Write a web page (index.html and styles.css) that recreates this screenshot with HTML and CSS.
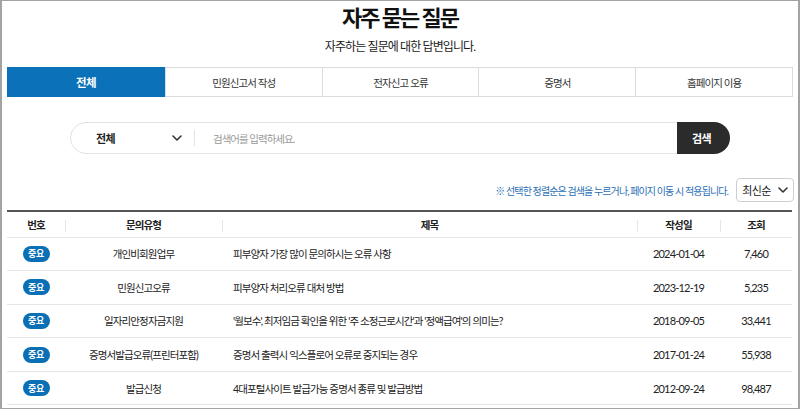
FILE: index.html
```html
<!DOCTYPE html>
<html lang="ko">
<head>
<meta charset="utf-8">
<title>자주 묻는 질문</title>
<link rel="stylesheet" href="styles.css">
</head>
<body>
<div class="frame">
  <h1 class="title">자주 묻는 질문</h1>
  <p class="subtitle">자주하는 질문에 대한 답변입니다.</p>

  <ul class="tabs">
    <li class="tab active">전체</li>
    <li class="tab">민원신고서 작성</li>
    <li class="tab">전자신고 오류</li>
    <li class="tab">증명서</li>
    <li class="tab">홈페이지 이용</li>
  </ul>

  <form class="search">
    <div class="select">
      <span class="select-label">전체</span>
      <svg class="chev" width="10" height="6" viewBox="0 0 10 6"><path d="M1 1l4 4 4-4" fill="none" stroke="#333" stroke-width="1.6" stroke-linecap="round" stroke-linejoin="round"/></svg>
    </div>
    <span class="divider"></span>
    <span class="placeholder">검색어를 입력하세요.</span>
    <button type="button" class="search-btn">검색</button>
  </form>

  <div class="sortbar">
    <span class="note">※ 선택한 정렬순은 검색을 누르거나, 페이지 이동 시 적용됩니다.</span>
    <div class="sort">최신순
      <svg class="chev" width="10" height="6" viewBox="0 0 10 6"><path d="M1 1l4 4 4-4" fill="none" stroke="#333" stroke-width="1.6" stroke-linecap="round" stroke-linejoin="round"/></svg>
    </div>
  </div>

  <table class="board">
    <colgroup>
      <col class="c-no"><col class="c-type"><col class="c-title"><col class="c-date"><col class="c-view">
    </colgroup>
    <thead>
      <tr><th>번호</th><th>문의유형</th><th>제목</th><th>작성일</th><th>조회</th></tr>
    </thead>
    <tbody>
      <tr><td><span class="badge">중요</span></td><td>개인비회원업무</td><td class="subj">피부양자 가장 많이 문의하시는 오류 사항</td><td class="num">2024-01-04</td><td class="num">7,460</td></tr>
      <tr><td><span class="badge">중요</span></td><td>민원신고오류</td><td class="subj">피부양자 처리오류 대처 방법</td><td class="num">2023-12-19</td><td class="num">5,235</td></tr>
      <tr><td><span class="badge">중요</span></td><td>일자리안정자금지원</td><td class="subj">'월보수', 최저임금 확인을 위한 '주 소정근로시간'과 '정액급여'의 의미는?</td><td class="num">2018-09-05</td><td class="num">33,441</td></tr>
      <tr><td><span class="badge">중요</span></td><td>증명서발급오류(프린터포함)</td><td class="subj">증명서 출력시 익스플로어 오류로 중지되는 경우</td><td class="num">2017-01-24</td><td class="num">55,938</td></tr>
      <tr><td><span class="badge">중요</span></td><td>발급신청</td><td class="subj">4대포털사이트 발급가능 증명서 종류 및 발급방법</td><td class="num">2012-09-24</td><td class="num">98,487</td></tr>
    </tbody>
  </table>
</div>
</body>
</html>
```

FILE: styles.css
```css
* { box-sizing: border-box; }
html, body { margin: 0; padding: 0; background: #fff; }
body {
  font-family: Lato, "Noto Sans CJK KR", sans-serif;
  color: #222;
}
.frame {
  width: 800px;
  height: 409px;
  overflow: hidden;
  border: 1px solid #a3a3a3;
  border-left-width: 2px;
  border-right-width: 2px;
  padding: 2px 5px 0 5px;
}
.title {
  margin: 0;
  text-align: center;
  font-size: 22px;
  line-height: 30px;
  font-weight: 700;
  letter-spacing: -2px;
  color: #111;
}
.subtitle {
  margin: 6px 0 0;
  text-align: center;
  font-size: 12px;
  line-height: 16px;
  color: #1a1a1a;
  letter-spacing: -0.9px;
}
.tabs {
  list-style: none;
  margin: 12px 0 0;
  padding: 0;
  display: grid;
  grid-template-columns: repeat(5, 1fr);
  border: 1px solid #dcdcdc;
  height: 30px;
}
.tab {
  display: flex;
  align-items: center;
  justify-content: center;
  font-size: 10.5px;
  color: #333;
  border-left: 1px solid #dcdcdc;
  letter-spacing: -0.9px;
}
.tab:first-child { border-left: 0; }
.tab.active {
  background: #0b72b9;
  color: #fff;
  font-weight: 700;
  margin: -1px 0 -1px -1px;
  font-size: 11.5px;
  letter-spacing: -0.6px;
}
.search {
  margin: 25px auto 0;
  width: 660px;
  height: 32px;
  display: flex;
  align-items: center;
  border: 1px solid #e3e3e3;
  border-radius: 16px;
}
.select {
  display: flex;
  align-items: center;
  justify-content: space-between;
  width: 111px;
  padding-left: 25px;
  font-size: 11px;
  font-weight: 700;
  color: #222;
  letter-spacing: -0.6px;
}
.divider {
  width: 1px;
  height: 16px;
  background: #e3e3e3;
  margin-left: 12px;
}
.placeholder {
  flex: 1;
  margin-left: 18px;
  font-size: 10.5px;
  color: #999;
  letter-spacing: -1px;
}
.search-btn {
  width: 53px;
  height: 32px;
  margin: -1px -1px -1px 0;
  border: 0;
  border-radius: 0 16px 16px 0;
  background: #2b2b2b;
  color: #fff;
  font-family: inherit;
  font-size: 11px;
  font-weight: 700;
  padding: 0 4px 0 0;
  letter-spacing: -0.6px;
}
.sortbar {
  margin-top: 24px;
  display: flex;
  justify-content: flex-end;
  align-items: center;
  gap: 8px;
}
.note {
  font-size: 10px;
  color: #2a6fb6;
  letter-spacing: -0.9px;
}
.sort {
  width: 58px;
  height: 24px;
  border: 1px solid #cfcfcf;
  border-radius: 4px;
  display: flex;
  align-items: center;
  justify-content: center;
  gap: 7px;
  font-size: 11px;
  color: #222;
  margin-right: -1px;
  letter-spacing: -0.6px;
}
.board {
  width: 785px;
  margin-top: 8px;
  border-collapse: collapse;
  border-top: 2px solid #555;
  table-layout: fixed;
}
.c-no { width: 58px; }
.c-type { width: 157px; }
.c-title { width: 415px; }
.c-date { width: 83px; }
.c-view { width: 72px; }
th {
  height: 26px;
  font-size: 10.5px;
  font-weight: 700;
  color: #222;
  padding: 0;
  border-bottom: 1px solid #e6e6e6;
  position: relative;
  letter-spacing: -0.9px;
}
th + th::before {
  content: "";
  position: absolute;
  left: 0;
  top: 8px;
  height: 12px;
  width: 1px;
  background: #e6e6e6;
}
td {
  height: 33.6px;
  padding: 0;
  font-size: 10.5px;
  color: #222;
  text-align: center;
  border-bottom: 1px solid #e6e6e6;
  letter-spacing: -0.9px;
  white-space: nowrap;
}
td.num { font-size: 11px; letter-spacing: -0.8px; }
td.subj { text-align: left; padding-left: 11px; }
.badge {
  display: inline-flex;
  align-items: center;
  justify-content: center;
  width: 27px;
  height: 16px;
  border-radius: 8px;
  background: #0b6fb5;
  color: #fff;
  font-size: 9px;
  font-weight: 700;
  letter-spacing: -0.3px;
}
```
